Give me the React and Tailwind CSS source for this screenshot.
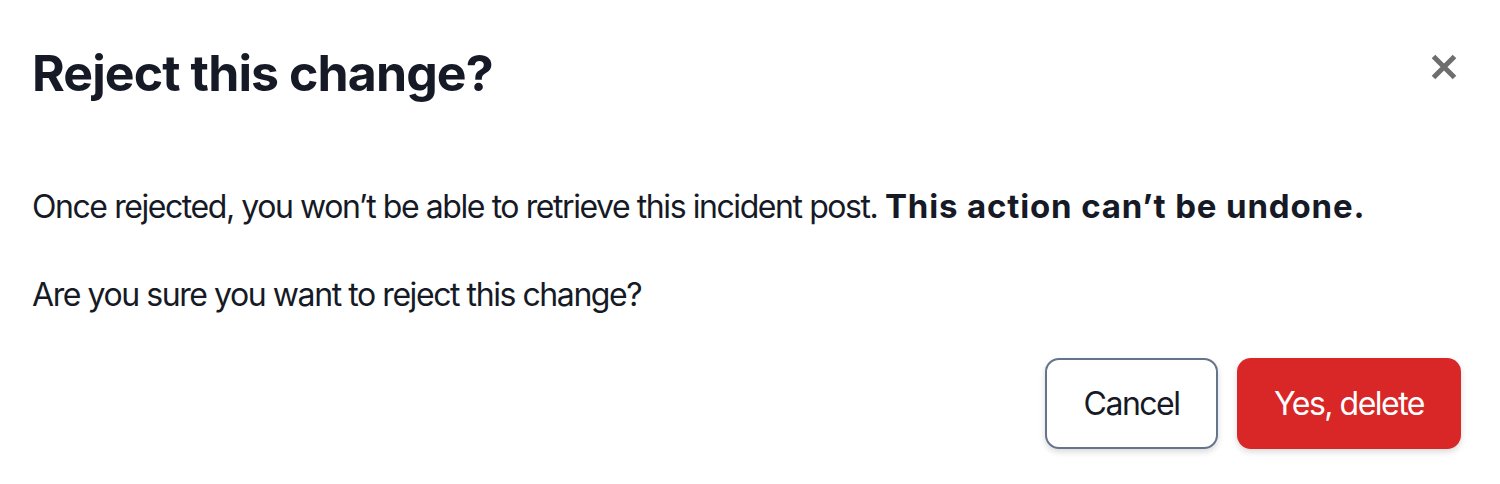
import React from 'react';

const App = () => {
  return (
    <div className="w-[1500px] h-[484px] bg-white font-['Inter',sans-serif] text-[#161a26]">
      <div className="pl-[32px] pr-[39px] pt-[43px]">
        <div className="flex items-start justify-between">
          <h2 className="text-[50px] leading-[60px] font-bold tracking-[-0.9px]">Reject this change?</h2>
          <button className="mt-[11px] mr-[4px] text-[#6e6e6e]">
            <svg width="26" height="26" viewBox="0 0 26 26">
              <path d="M2.5 2.5 L23.5 23.5 M23.5 2.5 L2.5 23.5" stroke="currentColor" strokeWidth="5" />
            </svg>
          </button>
        </div>
        <p className="mt-[84px] text-[32px] leading-[40px] tracking-[-1.43px]">
          Once rejected, you won’t be able to retrieve this incident post.{' '}
          <span className="font-bold text-[33px] leading-none tracking-[0.85px]">This action can’t be undone.</span>
        </p>
        <p className="mt-[48px] text-[32px] leading-[40px] tracking-[-1.43px]">Are you sure you want to reject this change?</p>
        <div className="mt-[43px] flex justify-end gap-[19px]">
          <button className="w-[173px] h-[91px] rounded-[14px] border-2 border-[#64748b] bg-white text-[32px] tracking-[-1.5px] shadow-[0_3px_6px_rgba(0,0,0,0.15)]">
            Cancel
          </button>
          <button className="w-[224px] h-[91px] rounded-[14px] bg-[#d92626] text-white text-[32px] tracking-[-1.5px] shadow-[0_3px_6px_rgba(0,0,0,0.15)]">
            Yes, delete
          </button>
        </div>
      </div>
    </div>
  );
};

export default App;
